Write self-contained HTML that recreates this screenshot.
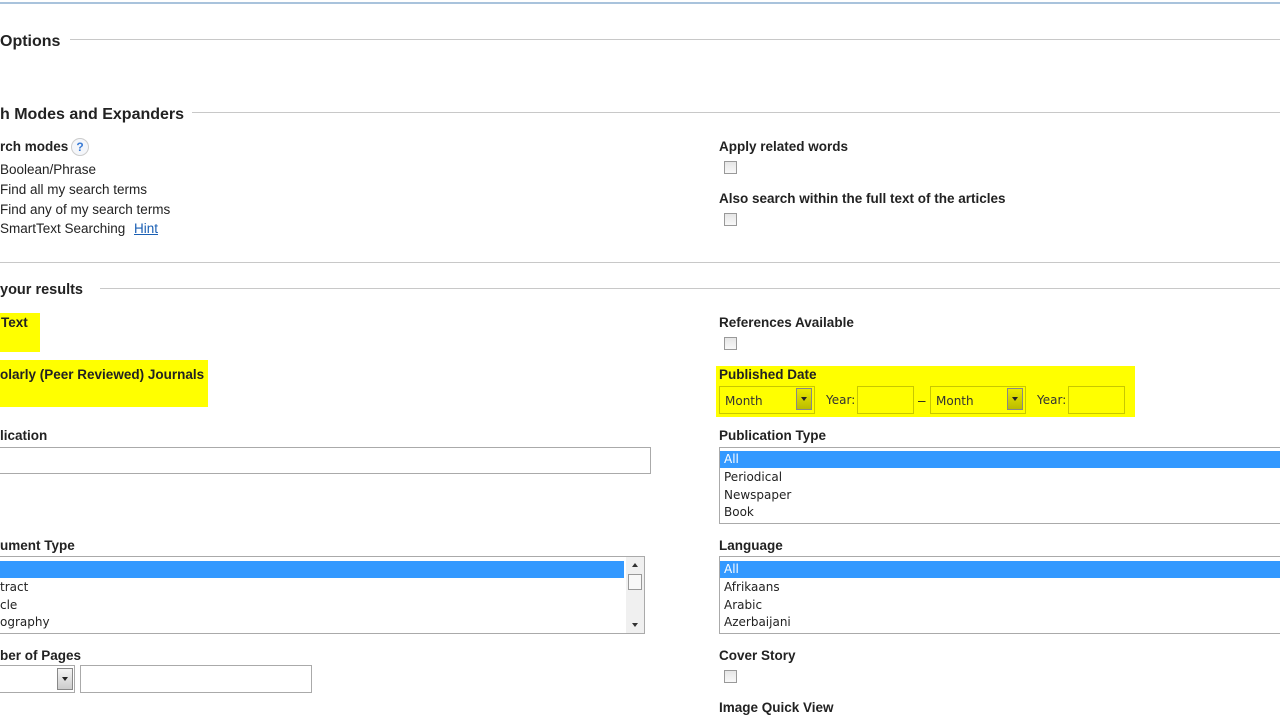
<!DOCTYPE html>
<html><head><style>
body{margin:0;width:1280px;height:720px;background:#fff;position:relative;overflow:hidden;font-family:"Liberation Sans",Arial,sans-serif;color:#222}
.a{position:absolute}
.h{font-weight:bold;font-size:16px;color:#222}
.b{font-weight:bold;font-size:13.5px;color:#222}
.t{font-size:13.5px;color:#222}
.ln{position:absolute;height:1px;background:#c8c8c8}
.cb{position:absolute;width:11px;height:11px;border:1px solid #999;background:linear-gradient(#e6e6e6,#f8f8f8)}
.y{position:absolute;background:#ffff00}
.box{position:absolute;border:1px solid #aaa;background:#fff;box-sizing:border-box}
.li{position:absolute;color:#222;font-family:"DejaVu Sans","Liberation Sans",sans-serif;font-size:12px}
.sel{position:absolute;background:#3399ff;height:16px}
.dd{position:absolute;width:16px;height:22px;border:1px solid #888;box-sizing:border-box;background:linear-gradient(#f4f4f4,#ccc)}
.dd:after{content:"";position:absolute;left:4px;top:8px;border-left:3px solid transparent;border-right:3px solid transparent;border-top:4px solid #222}
</style></head><body>
<div class="ln" style="top:2px;left:0;width:1280px;background:#a9c3dc;height:2px"></div>
<div class="a h" style="left:0;top:33px">Options</div>
<div class="ln" style="top:39px;left:70px;width:1210px"></div>
<div class="a h" style="left:0;top:106px;font-size:16px">h Modes and Expanders</div>
<div class="ln" style="top:112px;left:192px;width:1088px"></div>
<div class="a b" style="left:0;top:139px">rch modes</div>
<div class="a" style="left:71px;top:138px;width:18px;height:18px;border-radius:50%;border:1px solid #ccc;box-sizing:border-box;background:#f4f6fa;color:#3a7bd5;font-size:12px;font-weight:bold;text-align:center;line-height:16px">?</div>
<div class="a t" style="left:0;top:162px">Boolean/Phrase</div>
<div class="a t" style="left:0;top:182px">Find all my search terms</div>
<div class="a t" style="left:0;top:202px">Find any of my search terms</div>
<div class="a t" style="left:0;top:221px">SmartText Searching</div>
<div class="a t" style="left:134px;top:221px;color:#1a5fb4;text-decoration:underline">Hint</div>
<div class="a b" style="left:719px;top:139px">Apply related words</div>
<div class="cb" style="left:724px;top:161px"></div>
<div class="a b" style="left:719px;top:191px">Also search within the full text of the articles</div>
<div class="cb" style="left:724px;top:213px"></div>
<div class="ln" style="top:262px;left:0;width:1280px"></div>
<div class="a h" style="left:0;top:282px;font-size:14.5px">your results</div>
<div class="ln" style="top:288px;left:100px;width:1180px"></div>
<div class="y" style="left:0;top:313px;width:40px;height:39px"></div>
<div class="a b" style="left:1px;top:315px">Text</div>
<div class="y" style="left:0;top:360px;width:208px;height:47px"></div>
<div class="a b" style="left:0;top:367px">olarly (Peer Reviewed) Journals</div>
<div class="a b" style="left:719px;top:315px">References Available</div>
<div class="cb" style="left:724px;top:337px"></div>
<div class="y" style="left:716px;top:366px;width:419px;height:51px"></div>
<div class="a b" style="left:719px;top:367px">Published Date</div>
<div class="box" style="left:719px;top:386px;width:96px;height:28px;background:#ffff00;border-color:#c8c800"></div>
<div class="a li" style="left:725px;top:394px;color:#333">Month</div>
<div class="dd" style="left:796px;top:388px;background:linear-gradient(#eaea00,#bbbb00)"></div>
<div class="a li" style="left:826px;top:393px;color:#333">Year:</div>
<div class="box" style="left:857px;top:386px;width:57px;height:28px;background:#ffff00;border-color:#c8c800"></div>
<div class="a t" style="left:918px;top:393px">–</div>
<div class="box" style="left:930px;top:386px;width:96px;height:28px;background:#ffff00;border-color:#c8c800"></div>
<div class="a li" style="left:936px;top:394px;color:#333">Month</div>
<div class="dd" style="left:1007px;top:388px;background:linear-gradient(#eaea00,#bbbb00)"></div>
<div class="a li" style="left:1037px;top:393px;color:#333">Year:</div>
<div class="box" style="left:1068px;top:386px;width:57px;height:28px;background:#ffff00;border-color:#c8c800"></div>
<div class="a b" style="left:0;top:428px">lication</div>
<div class="box" style="left:-2px;top:447px;width:653px;height:27px"></div>
<div class="a b" style="left:719px;top:428px">Publication Type</div>
<div class="box" style="left:719px;top:447px;width:570px;height:77px"></div>
<div class="sel" style="left:720px;top:451px;width:560px;height:17px"></div>
<div class="li" style="left:724px;top:452px;color:#fff">All</div>
<div class="li" style="left:724px;top:470px">Periodical</div>
<div class="li" style="left:724px;top:488px">Newspaper</div>
<div class="li" style="left:724px;top:505px">Book</div>
<div class="a b" style="left:0;top:538px">ument Type</div>
<div class="box" style="left:-2px;top:556px;width:647px;height:78px"></div>
<div class="sel" style="left:0;top:561px;width:624px;height:17px"></div>
<div class="a" style="left:626px;top:557px;width:18px;height:76px;background:#f0f0f0"></div>
<div class="a" style="left:628px;top:574px;width:14px;height:16px;border:1px solid #999;box-sizing:border-box;background:#f8f8f8"></div>
<div class="a" style="left:632px;top:563px;border-left:3px solid transparent;border-right:3px solid transparent;border-bottom:4px solid #333"></div>
<div class="a" style="left:632px;top:623px;border-left:3px solid transparent;border-right:3px solid transparent;border-top:4px solid #333"></div>
<div class="li" style="left:0;top:580px">tract</div>
<div class="li" style="left:0;top:598px">cle</div>
<div class="li" style="left:0;top:615px">ography</div>
<div class="a b" style="left:719px;top:538px">Language</div>
<div class="box" style="left:719px;top:556px;width:570px;height:78px"></div>
<div class="sel" style="left:720px;top:561px;width:560px;height:17px"></div>
<div class="li" style="left:724px;top:562px;color:#fff">All</div>
<div class="li" style="left:724px;top:580px">Afrikaans</div>
<div class="li" style="left:724px;top:598px">Arabic</div>
<div class="li" style="left:724px;top:615px">Azerbaijani</div>
<div class="a b" style="left:0;top:648px">ber of Pages</div>
<div class="box" style="left:-2px;top:665px;width:77px;height:28px"></div>
<div class="dd" style="left:57px;top:668px"></div>
<div class="box" style="left:80px;top:665px;width:232px;height:28px"></div>
<div class="a b" style="left:719px;top:648px">Cover Story</div>
<div class="cb" style="left:724px;top:670px"></div>
<div class="a b" style="left:719px;top:700px">Image Quick View</div>
</body></html>
